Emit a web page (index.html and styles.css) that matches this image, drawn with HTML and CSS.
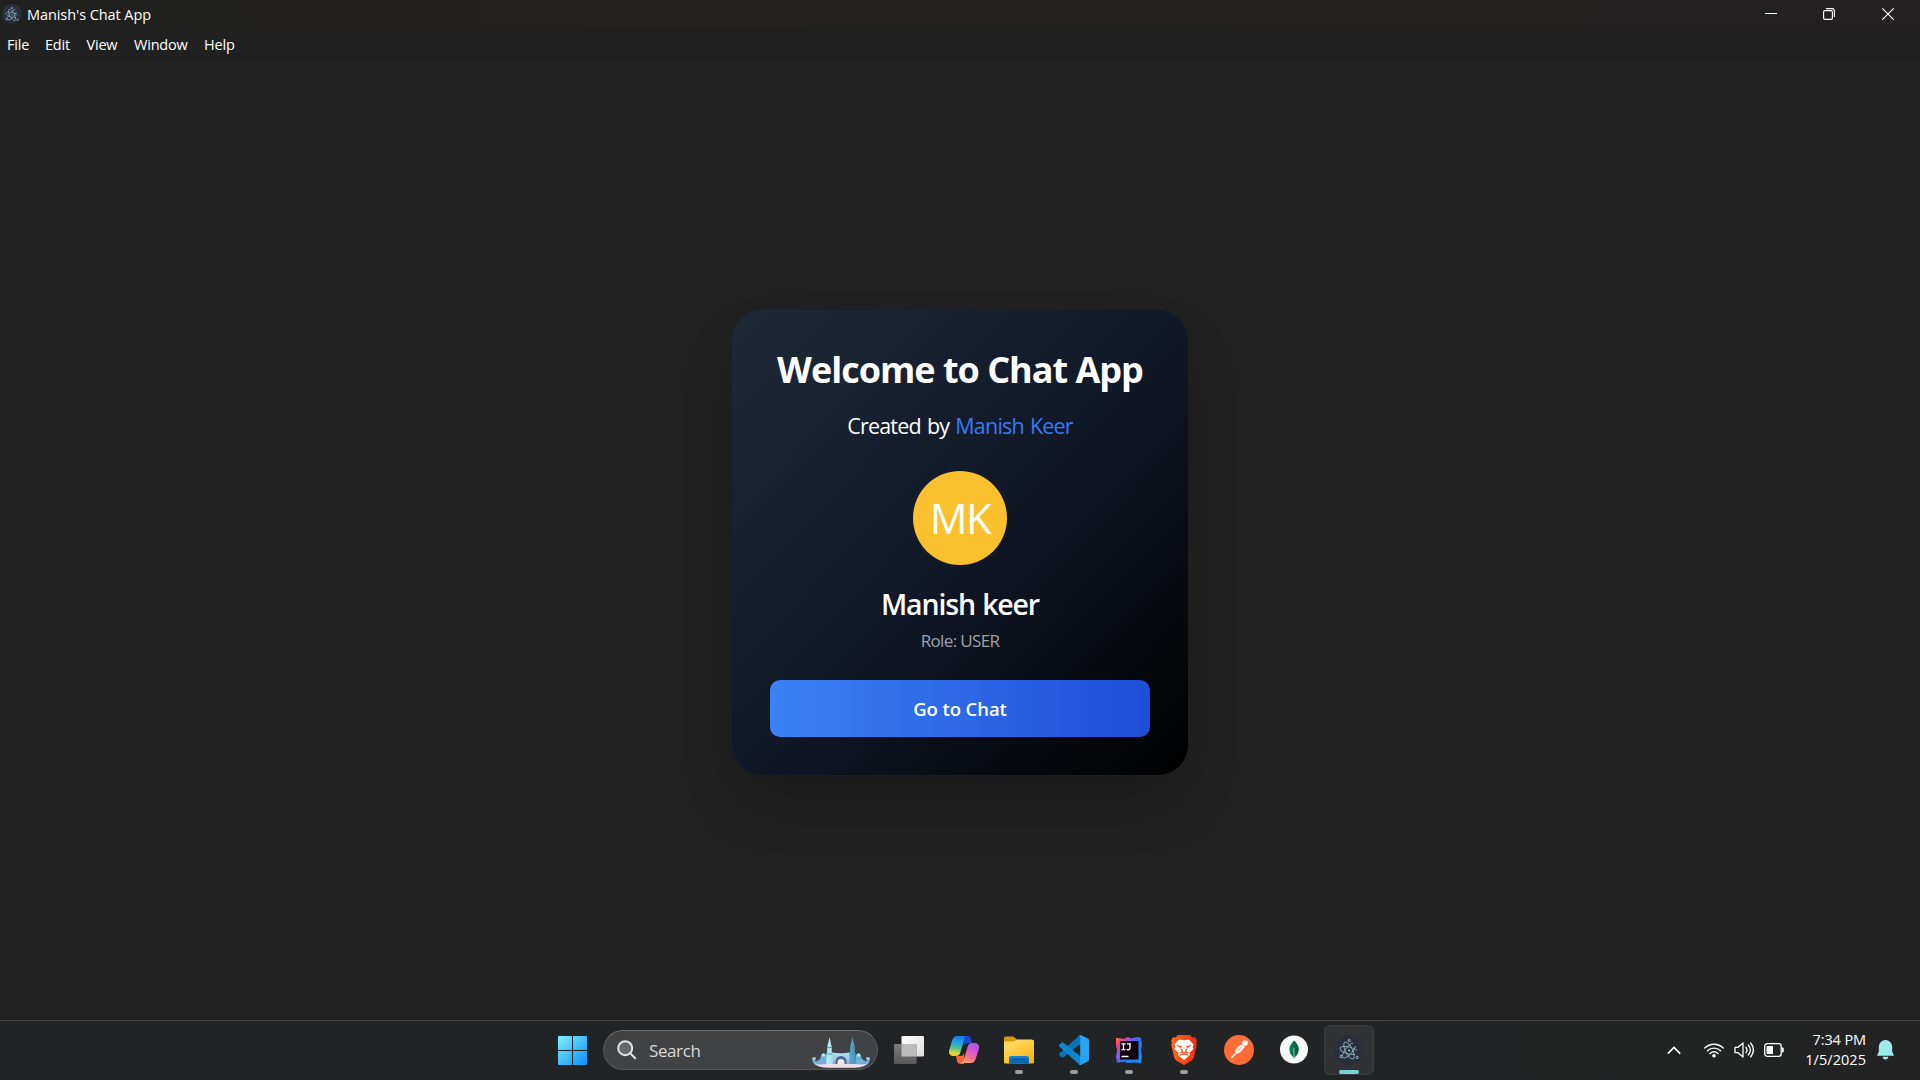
FILE: index.html
```
<!DOCTYPE html>
<html lang="en">
<head>
<meta charset="utf-8">
<title>Manish's Chat App</title>
<link rel="stylesheet" href="styles.css">
</head>
<body>
<svg class="defs" width="0" height="0" aria-hidden="true">
  <symbol id="electron" viewBox="0 0 20 22">
    <g fill="none" stroke="#9fc6d2" stroke-opacity=".8" stroke-width=".95">
      <ellipse cx="10" cy="11.500" rx="9.300" ry="3.500" transform="rotate(14 10 11.5)" stroke-dasharray="35 8" stroke-dashoffset="-4"/>
      <ellipse cx="10" cy="11.500" rx="9.300" ry="3.500" transform="rotate(63 10 11.5)"/>
      <ellipse cx="10" cy="11.500" rx="9.300" ry="3.500" transform="rotate(-50 10 11.5)" stroke-dasharray="37 6" stroke-dashoffset="-3"/>
    </g>
    <g fill="#2b2e3b" stroke="#9fc6d2" stroke-width=".9">
      <circle cx="10.300" cy="1.600" r="1.100"/><circle cx="2" cy="17.500" r="1.200"/><circle cx="18.200" cy="18.500" r="1.200"/>
    </g>
    <circle cx="10" cy="11.500" r="1" fill="#9fdce8"/>
  </symbol>
</svg>

<header class="titlebar">
  <span class="app-icon"><svg width="14" height="15"><use href="#electron"/></svg></span>
  <span class="app-title">Manish's Chat App</span>
  <div class="controls">
    <span><svg width="12" height="12"><path d="M0 5.5h12" stroke="#fff"/></svg></span>
    <span><svg width="12" height="12" fill="none" stroke="#fff" stroke-width="1.1"><path d="M3 .6h6.2a2.2 2.2 0 0 1 2.2 2.2V9"/><rect x=".6" y="2.6" width="8.8" height="8.8" rx="1.3"/></svg></span>
    <span><svg width="12" height="12"><path d="M.3.3l11.4 11.4M11.7.3L.3 11.7" stroke="#fff" stroke-width="1.1"/></svg></span>
  </div>
</header>
<nav class="menubar">
  <span class="m-file">File</span><span class="m-edit">Edit</span><span class="m-view">View</span><span class="m-window">Window</span><span class="m-help">Help</span>
</nav>

<main class="stage">
  <section class="card">
    <h1 class="welcome">Welcome to Chat App</h1>
    <p class="created">Created by <span class="author">Manish Keer</span></p>
    <div class="avatar"><span>MK</span></div>
    <h2 class="name">Manish keer</h2>
    <p class="role">Role: USER</p>
    <button class="go"><span>Go to Chat</span></button>
  </section>
</main>

<footer class="taskbar">
  <div class="start">
    <svg width="29" height="29" viewBox="0 0 29 29">
      <defs><linearGradient id="win" x1="0" y1="0" x2="29" y2="29" gradientUnits="userSpaceOnUse"><stop offset="0" stop-color="#7cf3ff"/><stop offset=".5" stop-color="#45bff9"/><stop offset="1" stop-color="#0a91fb"/></linearGradient></defs>
      <path fill="url(#win)" d="M1 0h13v14H0V1a1 1 0 0 1 1-1zM15 0h13a1 1 0 0 1 1 1v13H15zM0 15h14v14H1a1 1 0 0 1-1-1zM15 15h14v13a1 1 0 0 1-1 1H15z"/>
    </svg>
  </div>
  <div class="search">
    <svg width="20" height="20" fill="none" stroke="#e4e4e4" stroke-width="2"><circle cx="8.2" cy="8.2" r="7" fill="#66686a"/><path d="M13.2 13.2l5 5" stroke-linecap="round"/></svg>
    <span class="search-label">Search</span>
    <svg class="castle" width="58" height="31" viewBox="0 0 58 31">
      <defs>
        <linearGradient id="tower" x1="0" x2="1"><stop offset="0" stop-color="#b9eef8"/><stop offset=".5" stop-color="#7cc9e2"/><stop offset="1" stop-color="#4594b8"/></linearGradient>
        <linearGradient id="wall" x1="0" x2="0" y1="0" y2="1"><stop offset="0" stop-color="#b4e2f4"/><stop offset="1" stop-color="#8fb4e4"/></linearGradient>
      </defs>
      <path d="M1 25q28-3 56 0-2 5-15 5.800H16Q3 30 1 25z" fill="#efdfe8"/>
      <path d="M0 21.500l3 1 1 2 4-2.500 1.500-4.500h4l2 6v3.500Q6 28 3 26.500 0 25 0 21.500zM58 21.500l-3 1-1 2-4-2.500-1.500-4.500h-4l-2 6v3.500q9.500 1 12.500-.5 3-1.500 3-5z" fill="#6ab0d6"/>
      <path d="M0 20.500h4l-.500 2H1zM58 20.500h-4l.5 2H57zM9.500 17.500l2-1.500 2 1.500-.5 2h-3zM48.500 17.500l-2-1.500-2 1.500.5 2h3z" fill="#b5e6f5"/>
      <path d="M20 15.500q9 1.500 18 0V27H20z" fill="url(#wall)"/>
      <path d="M23.500 27v-2.500a5.500 5.500 0 0 1 11 0V27z" fill="#456a93"/><path d="M25.500 28v-2.500a3.500 3.500 0 0 1 7 0V28z" fill="#f3e4d8"/>
      <path d="M14.300 27V17l.9-2v-5L17.500 0l2.300 10v5l.9 2v10zM37.300 27V17l.9-2v-5L40.500 0l2.300 10v5l.9 2v10z" fill="url(#tower)"/>
      <path d="M14.500 17h6M15.200 10.500h4.600M37.500 17h6M38.200 10.500h4.600" stroke="#3f93bb" stroke-width=".9"/>
      <path d="M10 24l2 2.500H8zM48 24l-2 2.500h4zM21 24h2v3h-2zM35 24h2v3h-2z" fill="#c396c9" opacity=".8"/>
    </svg>
  </div>

  <div class="apps">
    <div class="app">
      <svg width="30" height="28" viewBox="0 0 30 28">
        <defs><linearGradient id="tvw" x2="1" y2="1"><stop stop-color="#fff"/><stop offset="1" stop-color="#dedede"/></linearGradient><linearGradient id="tvg" y2="1" x2="0"><stop stop-color="#7b7b7b"/><stop offset="1" stop-color="#595959"/></linearGradient></defs>
        <rect x="7.500" y="0" width="22.500" height="20.500" rx="1.300" fill="url(#tvw)"/><rect y="8" width="22.500" height="20" rx="1.300" fill="url(#tvg)"/><path d="M7.500 8h14a1 1 0 0 1 1 1v11.500h-15z" fill="#bcbcbc"/>
      </svg>
    </div>
    <div class="app">
      <svg width="30" height="28" viewBox="0 0 30 28">
        <defs>
          <linearGradient id="cpl" x1=".5" y1="0" x2=".3" y2="1"><stop stop-color="#1c76e8"/><stop offset=".3" stop-color="#21a2e4"/><stop offset=".6" stop-color="#4cc293"/><stop offset=".85" stop-color="#d8d73a"/><stop offset="1" stop-color="#f1cc28"/></linearGradient>
          <linearGradient id="cpr" x1=".7" y1="0" x2=".3" y2="1"><stop stop-color="#a55be8"/><stop offset=".4" stop-color="#dc58cd"/><stop offset=".7" stop-color="#f96a8b"/><stop offset="1" stop-color="#ffa66f"/></linearGradient>
        </defs>
        <path d="M15 0h3.500c2 0 3 1.200 3.500 3l1 4h-4c-2.500 0-3.600 1-4.200 3z" fill="#1b49cb"/>
        <path d="M15 28h-3.500c-2 0-3-1.200-3.500-3l-1-5h4c2.500 0 3.600-1 4.200-3z" fill="#f9633e"/>
        <path d="M8.500 0h10c-2 0-2.800 1.500-3.500 4l-3.700 12.500c-.8 2.700-2 3.500-4.500 3.500H4c-3.300 0-4.700-2.600-3.700-6.300L2.800 5.500C3.900 1.800 5.500 0 8.500 0z" fill="url(#cpl)"/>
        <path d="M21.500 27h-10c2 0 2.800-1.500 3.500-4l3.700-12.500c.8-2.700 2-3.500 4.500-3.500H26c3.300 0 4.700 2.600 3.700 6.300l-2.500 8.200c-1.100 3.700-2.700 5.500-5.700 5.500z" fill="url(#cpr)"/>
      </svg>
    </div>
    <div class="app running">
      <svg width="30" height="28" viewBox="0 0 30 28">
        <defs><linearGradient id="fld" x2=".7" y2="1"><stop stop-color="#ffe07a"/><stop offset=".5" stop-color="#ffcc42"/><stop offset="1" stop-color="#f8b70c"/></linearGradient><linearGradient id="fldb" x2="0" y2="1"><stop stop-color="#1684dc"/><stop offset="1" stop-color="#0760a9"/></linearGradient></defs>
        <path d="M0 2a1.500 1.500 0 0 1 1.500-1.500h8L13 3.500h15V10H0z" fill="#dc9608"/>
        <path d="M0 5.500h9.500l3.200-1.700H28.500A1.500 1.500 0 0 1 30 5.300V26a1.500 1.500 0 0 1-1.500 1.500h-27A1.500 1.500 0 0 1 0 26z" fill="url(#fld)"/>
        <path d="M5 27.500V22a2 2 0 0 1 2-2h16a2 2 0 0 1 2 2v5.500z" fill="url(#fldb)"/><path d="M9 23.500h12" stroke="#064f93" stroke-width="1.400" stroke-linecap="round"/>
      </svg>
    </div>
    <div class="app running">
      <svg width="30" height="30" viewBox="0 0 30 30">
        <path d="M22 8.300L4.500 22.300a1.700 1.700 0 0 1-2.200 0L.5 20.500a1.500 1.500 0 0 1 0-2.200L20 .8q1-.8 2-.8z" fill="#0872ba"/>
        <path d="M22 21.700L4.500 7.700a1.700 1.700 0 0 0-2.200 0L.5 9.500a1.500 1.500 0 0 0 0 2.200L20 29.200q1 .8 2 .8z" fill="#1286cd"/>
        <path d="M21.700 0l7.200 3.400Q30 4 30 5.200v19.600q0 1.200-1.100 1.800L21.700 30q-1.200.2-1.900-.7 1.400.3 1.400-1.300V2q0-1.600-1.400-1.300.7-.9 1.900-.7z" fill="#27a3f2"/>
      </svg>
    </div>
    <div class="app running">
      <svg width="26" height="26" viewBox="0 0 26 26">
        <defs><linearGradient id="ij" x2="1" y2=".8"><stop stop-color="#ff8b3c"/><stop offset=".18" stop-color="#f43d86"/><stop offset=".4" stop-color="#815eec"/><stop offset=".6" stop-color="#2875f2"/><stop offset="1" stop-color="#168df6"/></linearGradient></defs>
        <path d="M0 1l8 .8L12 0l3 1.500L22 0l3 1 1 6-1 6 1 6-1 7-7-.6L12 26l-4-1-7 .5L0 20l1-7-1-5z" fill="url(#ij)"/><rect x="4" y="4" width="18.500" height="18.500" fill="#10020f"/>
        <path d="M5.500 6.800h4M5.500 12.700h4M7.500 6.800v5.900M11 6.800h4M14 6.800v4a2 2 0 0 1-3.300 1.500M5.500 19.500h7" fill="none" stroke="#fff" stroke-width="1.300"/>
      </svg>
    </div>
    <div class="app running">
      <svg width="26" height="30" viewBox="0 0 26 30">
        <defs><linearGradient id="brv" x2="1"><stop stop-color="#ff6a16"/><stop offset=".5" stop-color="#fb4a19"/><stop offset="1" stop-color="#ef2b18"/></linearGradient></defs>
        <path d="M7 0h12l2.500 2.500L24 2.300l2 3-.8 2.500.6 2-3 12.700c-.5 1.500-1.200 2.400-2.400 3.200L13 30l-7.400-4.300c-1.200-.8-1.900-1.700-2.400-3.200L.2 9.800l.6-2L0 5.300l2-3 2.500.2z" fill="url(#brv)"/>
        <path d="M8 4.500l5 .8 5-.8 4.500 5-1 2.500 1 2-4.300 4 .8 2L13 25l-6-5 .8-2-4.300-4 1-2-1-2.500z" fill="#fff"/>
        <path d="M5.800 10.500l4.400 1.300-1.500 1.500M20.200 10.500l-4.400 1.300 1.500 1.500M8.500 18l4.500-1 4.500 1M10.300 14l1.200 3M15.700 14l-1.200 3M8.500 20.500l4.500-1.800 4.500 1.800" fill="none" stroke="#fb4a19" stroke-width="1.200"/>
      </svg>
    </div>
    <div class="app">
      <svg width="30" height="30" viewBox="0 0 30 30">
        <circle cx="15" cy="15" r="15" fill="#ff6c37"/>
        <circle cx="21" cy="8" r="2.800" fill="#fff"/><path d="M18.500 9.500l2.500 2.500-5.400 6-4-1.500z" fill="#fff"/><path d="M18.500 9.500c-3 0-6 3-7.500 7l2.500 2.200 6.500-7z" fill="#fff3ee"/><path d="M12.500 17.500l-4.700 5" stroke="#fff" stroke-width="1.500" stroke-linecap="round"/><path d="M13 16.500l4.500-4.700M18.800 9.500l2 2" stroke="#ff9a75" stroke-width=".8"/>
      </svg>
    </div>
    <div class="app">
      <svg width="30" height="30" viewBox="0 0 30 30">
        <circle cx="15" cy="14.500" r="14" fill="#f9f9f9"/><path d="M15 5.500c3 3 4.600 5.700 4.600 9 0 3.800-2.300 6.500-4.600 8.200-2.300-1.700-4.600-4.400-4.600-8.200 0-3.300 1.600-6 4.600-9z" fill="#087a4d"/><path d="M15 5.500c3 3 4.600 5.700 4.600 9 0 3.800-2.300 6.500-4.600 8.200z" fill="#056342"/><path d="M15 13v11" stroke="#a8bdb2"/>
      </svg>
    </div>
    <div class="app active">
      <span class="electron-disc"><svg width="20" height="22"><use href="#electron"/></svg></span>
    </div>
  </div>

  <div class="tray">
    <svg class="chevron" width="14" height="9" fill="none" stroke="#fff" stroke-width="1.700"><path d="M.8 7.700L7 1.500l6.200 6.200"/></svg>
    <svg class="wifi" width="20" height="16" fill="none" stroke="#fff" stroke-width="1.400" stroke-linecap="round"><path d="M.8 6a13 13 0 0 1 18.400 0M3.500 8.800a9.200 9.200 0 0 1 13 0M6 11.400a5.600 5.600 0 0 1 8 0"/><circle cx="10" cy="13.800" r="1.100" fill="#fff"/></svg>
    <svg class="sound" width="20" height="18" fill="none" stroke="#fff" stroke-width="1.300" stroke-linecap="round" stroke-linejoin="round"><path d="M1 6.300h3L9 2v14l-5-4.300H1zM12 6.300q2 2.700 0 5.400M14.300 4q4.200 5 0 10M16.700 2q5.400 7 0 14"/></svg>
    <svg class="battery" width="20" height="14"><rect x=".7" y=".7" width="16.500" height="12.600" rx="2.600" fill="none" stroke="#fff" stroke-width="1.300"/><path d="M3.500 3h5.500v8H3.500a1 1 0 0 1-1-1V4a1 1 0 0 1 1-1zM18 4.500h.6a1.200 1.200 0 0 1 1.200 1.200v2.600a1.200 1.200 0 0 1-1.200 1.200H18z" fill="#fff"/></svg>
    <div class="clock"><span class="time">7:34 PM</span><span class="date">1/5/2025</span></div>
    <svg class="bell" width="17" height="20" fill="#9cecee"><path d="M8.500 0a6.700 6.700 0 0 1 6.700 6.700v5l1.600 3.200c.2.500 0 .9-.6.900H.8c-.6 0-.8-.4-.6-.9l1.600-3.200v-5A6.700 6.700 0 0 1 8.500 0zM5.700 16.800h5.600a2.800 2.600 0 0 1-5.600 0z"/></svg>
  </div>
</footer>
</body>
</html>
```
FILE: styles.css
```
* { box-sizing: border-box; margin: 0; padding: 0; }
body {
  width: 1920px; height: 1080px; overflow: hidden;
  display: flex; flex-direction: column;
  background: #212121; color: #fff;
  font-family: "Open Sans", "Noto Sans", sans-serif;
  white-space: nowrap;
}
svg { display: block; flex: none; }
.defs { position: absolute; }

.titlebar { height: 28px; display: flex; align-items: center; padding: 0 3px 0 2px; background: linear-gradient(90deg, #20201f, #242020 60%, #222020); }
.app-icon { width: 20px; height: 20px; border-radius: 50%; background: #2b2e3b; display: grid; place-items: center; }
.app-title { margin-left: 5px; padding-top: 2px; font-size: 14.500px; letter-spacing: -.07px; line-height: 20px; }
.controls { margin-left: auto; display: flex; }
.controls span { width: 58.500px; display: flex; justify-content: center; }

.menubar { height: 34px; display: flex; align-items: center; padding-left: 7px; background: #202020; font-size: 14.500px; line-height: 34px; }
.menubar span { letter-spacing: -.2px; }
.m-file { width: 38px; }
.m-edit { width: 41.500px; }
.m-view { width: 47.500px; }
.m-window { width: 70px; }

.stage { flex: 1; display: flex; align-items: center; justify-content: center; padding-top: 2px; }
.card {
  width: 456px; height: 465px; padding: 37px 38px; border-radius: 30px;
  display: flex; flex-direction: column; align-items: center;
  background: linear-gradient(to bottom right, #1f2937, #111827 50%, #000);
  box-shadow: 0 31px 62px -15px rgba(0, 0, 0, .25);
}
.welcome { font-size: 36px; font-weight: 700; line-height: 45px; letter-spacing: -1px; }
.created { margin-top: 16px; font-size: 21.500px; line-height: 35px; letter-spacing: -.8px; word-spacing: 1.300px; }
.author { color: #367cf7; }
.avatar { width: 94px; height: 94px; margin-top: 28px; border-radius: 50%; background: #fbc02d; display: grid; place-items: center; font-size: 42px; line-height: 92px; letter-spacing: -1.500px; }
.name { margin-top: 19px; font-size: 28.500px; font-weight: 600; line-height: 40px; letter-spacing: -1.150px; word-spacing: 1px; }
.role { margin-top: 4px; font-size: 17px; line-height: 25px; color: #9ca3af; letter-spacing: -.650px; }
.go { width: 380px; height: 57px; margin-top: 27px; border: 0; border-radius: 10px; background: linear-gradient(90deg, #3b82f6, #1d4ed8); color: #fff; font: 600 18.500px/57px "Open Sans", "Noto Sans", sans-serif; letter-spacing: -.1px; }

.taskbar { height: 60px; border-top: 1px solid #4a4a4a; display: flex; align-items: center; padding: 0 0 1px 558px; background: linear-gradient(90deg, #202325, #202426 45%, #222324 75%, #232323); }
.start { margin-right: 16px; }
.search { width: 275px; height: 40px; padding: 0 7px 0 13px; border: 1px solid #55585a; border-top-color: #6c6e70; border-radius: 20px; background: #404244; display: flex; align-items: center; }
.search-label { margin-left: 12px; padding-top: 1px; font-size: 17px; line-height: 24px; color: #d9d9d9; letter-spacing: -.4px; }
.castle { margin-left: auto; margin-top: 4px; }
.apps { display: flex; margin-left: 3.500px; }
.app { width: 55px; height: 50px; display: flex; align-items: center; justify-content: center; position: relative; }
.running::after, .active::after { content: ""; position: absolute; bottom: 1px; left: 23.500px; width: 8px; height: 4px; border-radius: 2px; background: #9b9c9d; }
.active { width: 50px; margin-left: 2.500px; border-radius: 6px; background: #303234; box-shadow: inset 0 0 0 1px #3a3c3e; }
.active::after { left: 15px; width: 20px; background: #76d1d9; }
.electron-disc { width: 30px; height: 30px; border-radius: 50%; background: #2b2e3b; display: grid; place-items: center; }

.tray { margin-left: 293px; display: flex; align-items: center; }
.wifi { margin-left: 23px; }
.sound { margin-left: 10px; }
.battery { margin-left: 10px; }
.clock { width: 82px; display: flex; flex-direction: column; align-items: flex-end; font-size: 14.500px; line-height: 20px; }
.time { letter-spacing: -.1px; }
.date { letter-spacing: .05px; }
.bell { margin-left: 11px; }
```
